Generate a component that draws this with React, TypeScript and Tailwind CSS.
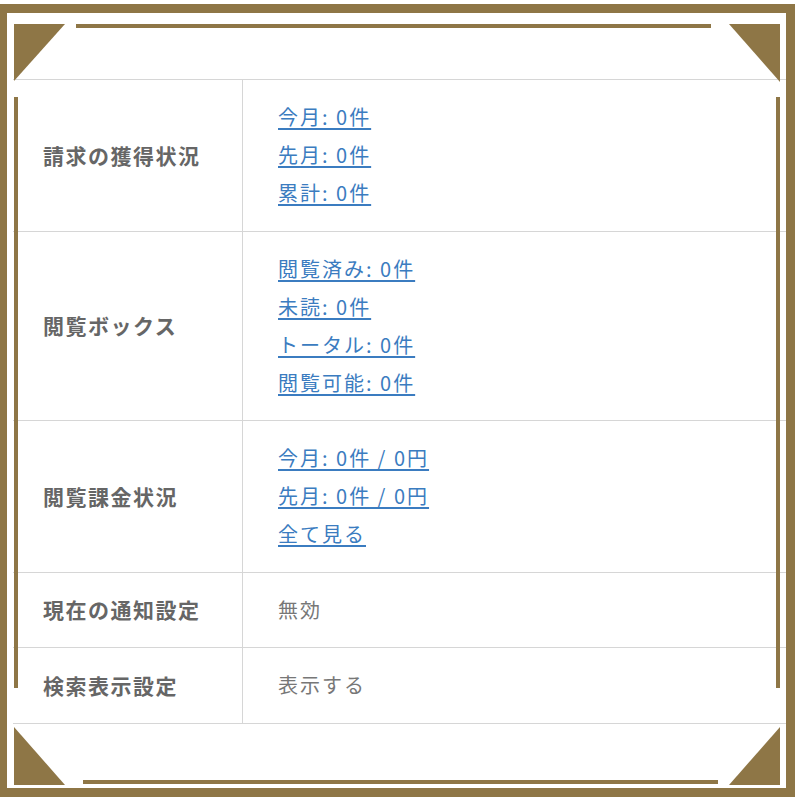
import React from 'react';

type Row = {
  label: string;
  links?: string[];
  text?: string;
};

const rows: Row[] = [
  { label: '請求の獲得状況', links: ['今月: 0件', '先月: 0件', '累計: 0件'] },
  { label: '閲覧ボックス', links: ['閲覧済み: 0件', '未読: 0件', 'トータル: 0件', '閲覧可能: 0件'] },
  { label: '閲覧課金状況', links: ['今月: 0件 / 0円', '先月: 0件 / 0円', '全て見る'] },
  { label: '現在の通知設定', text: '無効' },
  { label: '検索表示設定', text: '表示する' },
];

const GOLD = '#8e7646';

function Frame() {
  return (
    <svg
      className="absolute inset-0 z-10 pointer-events-none"
      width="800"
      height="800"
      viewBox="0 0 800 800"
    >
      {/* outer band */}
      <path fill={GOLD} fillRule="evenodd" d="M0 4H795V797H0Z M7 13V788H786V13Z" />
      {/* corners */}
      <polygon fill={GOLD} points="14,24 65,24 14,81" />
      <polygon fill={GOLD} points="729,24 780,24 780,82" />
      <polygon fill={GOLD} points="14,727 14,785 65,785" />
      <polygon fill={GOLD} points="780,727 780,785 729,785" />
      {/* inner lines */}
      <rect fill={GOLD} x="76" y="24" width="635" height="4" />
      <rect fill={GOLD} x="83" y="780" width="635" height="4" />
      <rect fill={GOLD} x="14" y="97" width="4" height="591" />
      <rect fill={GOLD} x="776" y="97" width="4" height="591" />
    </svg>
  );
}

export default function App() {
  return (
    <div
      className="relative w-[800px] h-[800px] bg-white overflow-hidden"
      style={{ fontFamily: '"Noto Sans CJK JP", "Noto Sans", sans-serif' }}
    >
      <Frame />

      <div className="pt-[79px] pl-[13px]">
        <div className="w-[773px] border-t border-[#d6d6d6]">
          {rows.map((row) => (
            <div key={row.label} className="flex border-b border-[#d6d6d6]">
              <div className="w-[229px] shrink-0 flex items-center pl-[30px] text-[21px] font-bold tracking-[1.5px] text-[#666666]">
                {row.label}
              </div>
              <div className="flex-1 border-l border-[#d6d6d6] pl-[35px] pt-[18px] pb-[18.5px] text-[20px] leading-[38px] tracking-[2px]">
                {row.links ? (
                  row.links.map((l) => (
                    <div key={l}>
                      <a href="#" className="text-[#3b7cc0] underline underline-offset-[3px]">
                        {l}
                      </a>
                    </div>
                  ))
                ) : (
                  <div className="text-[#777777]">{row.text}</div>
                )}
              </div>
            </div>
          ))}
        </div>
      </div>
    </div>
  );
}
